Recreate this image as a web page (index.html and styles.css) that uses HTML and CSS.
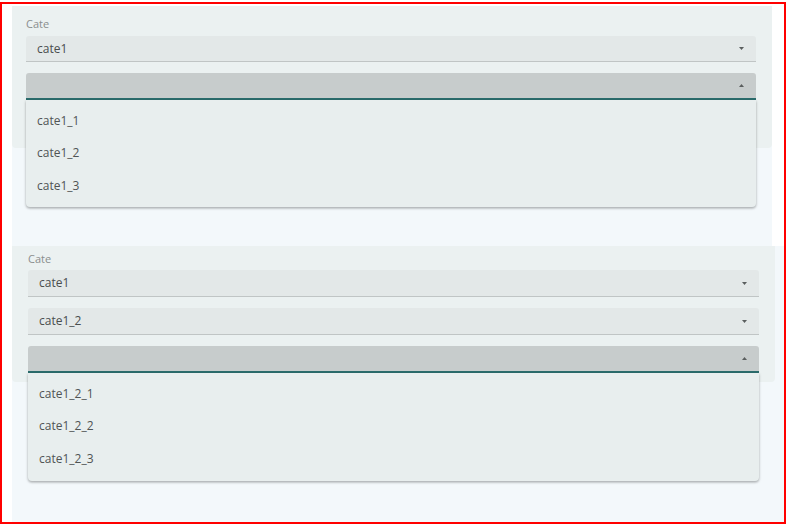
FILE: index.html
```html
<!DOCTYPE html>
<html lang="en">
<head>
<meta charset="utf-8">
<title>Cate selects</title>
<link rel="stylesheet" href="styles.css">
</head>
<body>
<div class="screen">
  <div class="frame frame-a">
    <div class="panel panel-a">
      <div class="label">Cate</div>
      <div class="select">
        <span class="value">cate1</span>
        <svg class="arrow" width="5" height="3" viewBox="0 0 5 3"><polygon points="0,0 5,0 2.5,3"/></svg>
      </div>
      <div class="select open">
        <span class="value"></span>
        <svg class="arrow" width="5" height="3" viewBox="0 0 5 3"><polygon points="0,3 5,3 2.5,0"/></svg>
        <div class="menu">
          <div class="item">cate1_1</div>
          <div class="item">cate1_2</div>
          <div class="item">cate1_3</div>
        </div>
      </div>
    </div>
  </div>
  <div class="frame frame-b">
    <div class="panel panel-b">
      <div class="label">Cate</div>
      <div class="select">
        <span class="value">cate1</span>
        <svg class="arrow" width="5" height="3" viewBox="0 0 5 3"><polygon points="0,0 5,0 2.5,3"/></svg>
      </div>
      <div class="select">
        <span class="value">cate1_2</span>
        <svg class="arrow" width="5" height="3" viewBox="0 0 5 3"><polygon points="0,0 5,0 2.5,3"/></svg>
      </div>
      <div class="select open">
        <span class="value"></span>
        <svg class="arrow" width="5" height="3" viewBox="0 0 5 3"><polygon points="0,3 5,3 2.5,0"/></svg>
        <div class="menu">
          <div class="item">cate1_2_1</div>
          <div class="item">cate1_2_2</div>
          <div class="item">cate1_2_3</div>
        </div>
      </div>
    </div>
  </div>
</div>
</body>
</html>
```

FILE: styles.css
```css
html, body {
  margin: 0;
  padding: 0;
  background: #ffffff;
}

body {
  font-family: "Open Sans", "Noto Sans", "Liberation Sans", sans-serif;
  font-size: 12px;
  color: #505454;
}

.screen {
  box-sizing: border-box;
  width: 786px;
  height: 522px;
  margin-top: 2px;
  border: 2px solid #ff0000;
  padding: 2px 0 0 10px;
  overflow: hidden;
  background: #ffffff;
}

.frame {
  background: #f3f8fb;
}

.frame-a {
  width: 760px;
  height: 240px;
}

.frame-b {
  width: 772px;
  height: 276px;
}

.panel {
  box-sizing: border-box;
  background: #ebf1f1;
  border-radius: 0 0 4px 4px;
  display: flex;
  flex-direction: column;
}

.panel-a {
  width: 760px;
  height: 142px;
  padding: 10px 16px 0 14px;
  gap: 11px;
}

.panel-b {
  width: 763px;
  height: 136px;
  padding: 5px 16px 0 16px;
  gap: 11px;
}

.label {
  font-size: 11px;
  line-height: 16px;
  color: #8a8e8e;
  margin-bottom: -7px;
}

.panel-b .label {
  margin-bottom: -8px;
}

.select {
  position: relative;
  box-sizing: border-box;
  height: 26px;
  display: flex;
  align-items: center;
  justify-content: space-between;
  padding: 0 12px 0 11px;
  background: #e3e8e8;
  border-bottom: 1px solid #c0c5c5;
  border-radius: 3px 3px 0 0;
  flex: none;
}

.panel-b .select {
  height: 27px;
}

.select.open {
  height: 27px;
  background: #c7cccc;
  border-bottom: 2px solid #2b6c6c;
}

.value {
  color: #4a4e4e;
  line-height: 16px;
}

.arrow {
  fill: #5a5e5e;
  display: block;
}

.menu {
  position: absolute;
  left: 0;
  right: 0;
  top: 100%;
  margin-top: 2px;
  box-sizing: border-box;
  height: 107px;
  padding: 4px 0 7px;
  background: #e8eeee;
  border-radius: 0 0 4px 4px;
  box-shadow: 0 1px 3px rgba(0, 0, 0, 0.28), 0 2px 2px rgba(0, 0, 0, 0.08);
  z-index: 2;
}

.panel-b .menu {
  height: 108px;
}

.item {
  height: 32.5px;
  display: flex;
  align-items: center;
  padding-left: 11px;
  color: #505454;
}
```
